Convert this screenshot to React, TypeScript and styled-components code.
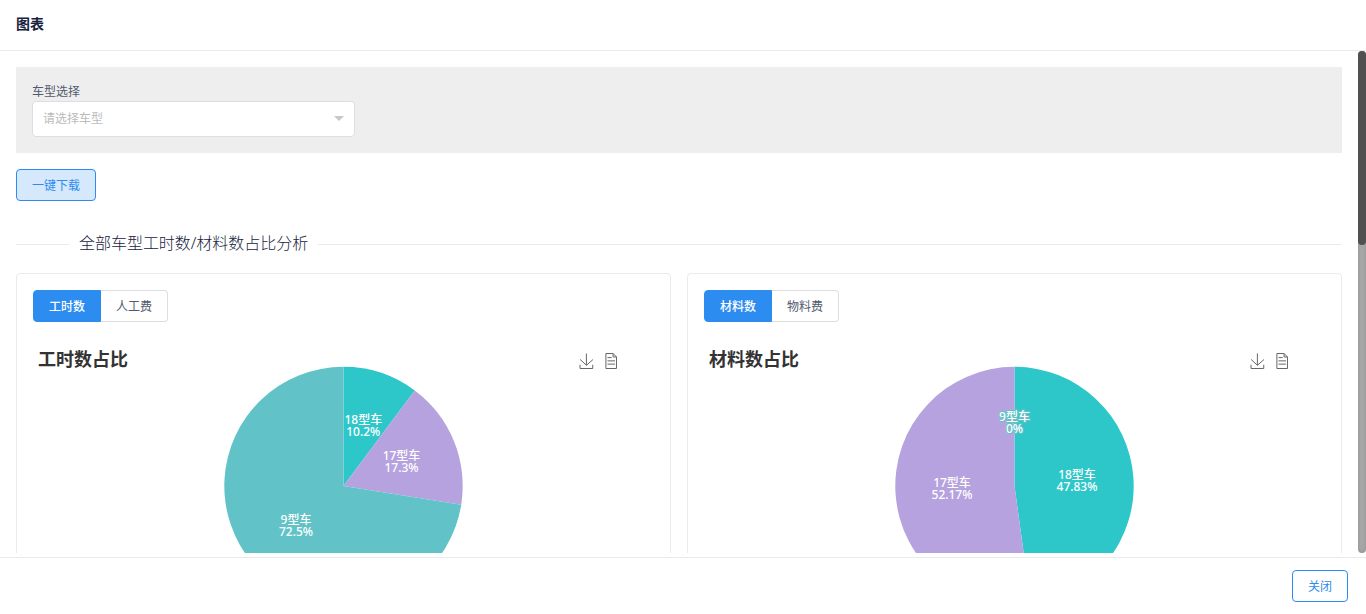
import React from 'react';
import styled, { createGlobalStyle } from 'styled-components';

const GlobalStyle = createGlobalStyle`
  * { box-sizing: border-box; }
  html, body { margin: 0; padding: 0; overflow: hidden; }
  body {
    font-family: "Noto Sans", "Noto Sans CJK SC", sans-serif;
    font-size: 12px;
    color: #515a6e;
    background: #fff;
  }
  button { font-family: inherit; }
`;

const Modal = styled.div`
  display: flex;
  flex-direction: column;
  width: 1366px;
  height: 614px;
  background: #fff;
`;

const Header = styled.header`
  height: 51px;
  flex: none;
  padding: 14px 16px 0;
  border-bottom: 1px solid #e8eaec;
  color: #17233d;
  font-size: 14px;
  font-weight: 700;
  line-height: 20px;
`;

const Body = styled.div`
  display: flex;
  flex: none;
  height: 502px;
`;

const Content = styled.main`
  width: 1358px;
  height: 502px;
  padding: 16px 16px 0;
  overflow: hidden;
`;

const ScrollTrack = styled.div`
  width: 8px;
  height: 502px;
  border-radius: 4px;
  background: #a8a8a8;
  box-shadow: inset 0 0 4px rgba(0, 0, 0, 0.15);
`;

const ScrollThumb = styled.div`
  height: 194px;
  border-radius: 4px;
  background: #505050;
`;

const Filter = styled.section`
  height: 86px;
  padding: 16px;
  background: #eee;
`;

const Label = styled.div`
  height: 18px;
  line-height: 17px;
`;

const Select = styled.div`
  display: flex;
  align-items: center;
  justify-content: space-between;
  width: 323px;
  height: 36px;
  padding: 0 10px;
  border: 1px solid #dcdee2;
  border-radius: 4px;
  background: #fff;
  color: #bbb;
  line-height: 34px;
`;

const Caret = styled.span`
  margin-bottom: 1px;
  border: 5px solid transparent;
  border-top-color: #c5c8ce;
  border-bottom: 0;
`;

const OutlineButton = styled.button<{ $active?: boolean; $width: number }>`
  display: block;
  width: ${(p) => p.$width}px;
  height: 32px;
  padding: 0;
  border: 1px solid #2d8cf0;
  border-radius: 4px;
  background: ${(p) => (p.$active ? '#d5e8fc' : '#fff')};
  color: #2d8cf0;
  font-size: 12px;
  line-height: 29px;
`;

const Actions = styled.div`
  margin-top: 16px;
`;

const Divider = styled.div`
  display: flex;
  align-items: center;
  height: 24px;
  margin: 31px 0 17px;
  color: #17233d;
  font-size: 16px;
  font-weight: 300;
  line-height: 24px;
  white-space: nowrap;

  &::before, &::after {
    content: '';
    height: 1px;
    background: #e8eaec;
  }
  &::before { width: 53px; }
  &::after { flex: 1; }
`;

const DividerText = styled.span`
  position: relative;
  top: -1px;
  padding: 0 10px;
  letter-spacing: -0.03px;
`;

const Cards = styled.div`
  display: grid;
  grid-template-columns: 655px 655px;
  gap: 16px;
`;

const Card = styled.section`
  height: 420px;
  padding: 16px;
  border: 1px solid #e8eaec;
  border-radius: 4px;
  background: #fff;
`;

const Tabs = styled.div`
  display: flex;
`;

const Tab = styled.button<{ $active?: boolean }>`
  width: ${(p) => (p.$active ? 68 : 67)}px;
  height: 32px;
  padding: 0;
  border: 1px solid ${(p) => (p.$active ? '#2d8cf0' : '#dcdee2')};
  border-left-width: ${(p) => (p.$active ? 1 : 0)}px;
  border-radius: ${(p) => (p.$active ? '4px 0 0 4px' : '0 4px 4px 0')};
  background: ${(p) => (p.$active ? '#2d8cf0' : '#fff')};
  color: ${(p) => (p.$active ? '#fff' : '#515a6e')};
  font-size: 12px;
  font-weight: ${(p) => (p.$active ? 500 : 400)};
  line-height: 29px;
`;

const ChartArea = styled.div`
  width: 621px;
  margin-top: 16px;
`;

const ChartHead = styled.div`
  display: flex;
  justify-content: space-between;
  height: 40px;
  margin-bottom: -40px;
  padding: 8px 35px 0 5px;
`;

const ChartTitle = styled.h2`
  margin: 0;
  color: #333;
  font-size: 18px;
  font-weight: 700;
  line-height: 26px;
`;

const Tools = styled.div`
  display: flex;
  gap: 10px;
  padding-top: 7px;
`;

const ToolIcon = styled.svg`
  width: 15px;
  height: 15px;
  overflow: visible;
  fill: none;
  stroke: #666;
  stroke-width: 1px;

  path { vector-effect: non-scaling-stroke; }
`;

const Pie = styled.svg`
  display: block;
`;

const SliceLabel = styled.text`
  fill: #fff;
  font-size: 12px;
  font-weight: 500;
  text-anchor: middle;
  paint-order: stroke;
  stroke-width: 2px;
  stroke-linejoin: round;
`;

const Footer = styled.footer`
  display: flex;
  justify-content: flex-end;
  height: 57px;
  margin-top: 4px;
  padding: 12px 18px;
  border-top: 1px solid #e8eaec;
`;

type Slice = { name: string; text: string; from: number; to: number; color: string; x: number; y: number };

const CX = 310.5;
const CY = 148;
const R = 119.2;

const point = (share: number) => {
  const a = share * Math.PI * 2;
  return `${CX + R * Math.sin(a)} ${CY - R * Math.cos(a)}`;
};

const slicePath = (s: Slice) =>
  `M${CX} ${CY}L${point(s.from)}A${R} ${R} 0 ${s.to - s.from > 0.5 ? 1 : 0} 1 ${point(s.to)}Z`;

const TEAL = '#2ec7c9';
const PURPLE = '#b6a2de';
const AQUA = '#61c3c7';

const charts: { title: string; tabs: [string, string]; slices: Slice[] }[] = [
  {
    title: '工时数占比',
    tabs: ['工时数', '人工费'],
    slices: [
      { name: '18型车', text: '10.2%', from: 0, to: 0.102, color: TEAL, x: 330.3, y: 86 },
      { name: '17型车', text: '17.3%', from: 0.102, to: 0.275, color: PURPLE, x: 368.5, y: 122 },
      { name: '9型车', text: '72.5%', from: 0.275, to: 1, color: AQUA, x: 263, y: 186 },
    ],
  },
  {
    title: '材料数占比',
    tabs: ['材料数', '物料费'],
    slices: [
      { name: '18型车', text: '47.83%', from: 0, to: 0.4783, color: TEAL, x: 373, y: 141 },
      { name: '17型车', text: '52.17%', from: 0.4783, to: 1, color: PURPLE, x: 248, y: 149 },
      { name: '9型车', text: '0%', from: 1, to: 1, color: AQUA, x: 310.5, y: 83 },
    ],
  },
];

function PieChart({ slices }: { slices: Slice[] }) {
  return (
    <Pie width="621" height="300">
      {slices.map((s) => (
        <path key={s.name} d={slicePath(s)} fill={s.color} />
      ))}
      {slices.map((s) => (
        <SliceLabel key={s.name} stroke={s.color}>
          <tspan x={s.x} y={s.y}>{s.name}</tspan>
          <tspan x={s.x} y={s.y + 12}>{s.text}</tspan>
        </SliceLabel>
      ))}
    </Pie>
  );
}

export default function App() {
  return (
    <>
      <GlobalStyle />
      <Modal>
        <Header>图表</Header>
        <Body>
          <Content>
            <Filter>
              <Label>车型选择</Label>
              <Select>
                <span>请选择车型</span>
                <Caret />
              </Select>
            </Filter>
            <Actions>
              <OutlineButton $active $width={80}>一键下载</OutlineButton>
            </Actions>
            <Divider>
              <DividerText>全部车型工时数/材料数占比分析</DividerText>
            </Divider>
            <Cards>
              {charts.map((c) => (
                <Card key={c.title}>
                  <Tabs>
                    <Tab $active>{c.tabs[0]}</Tab>
                    <Tab>{c.tabs[1]}</Tab>
                  </Tabs>
                  <ChartArea>
                    <ChartHead>
                      <ChartTitle>{c.title}</ChartTitle>
                      <Tools>
                        <ToolIcon viewBox="0.65 -1.93 58 58">
                          <path d="M4.7,22.9L29.3,45.5L54.7,23.4M4.6,43.6L4.6,58L53.8,58L53.8,43.6M29.2,45.1L29.2,0" />
                        </ToolIcon>
                        <ToolIcon viewBox="4.4 0.13 56 56">
                          <path d="M17.5,17.3H33M45.4,29.5h-28M11.5,2v56H51V14.8L38.4,2H11.5zM38.4,2.2v12.7H51M45.4,41.7h-28" />
                        </ToolIcon>
                      </Tools>
                    </ChartHead>
                    <PieChart slices={c.slices} />
                  </ChartArea>
                </Card>
              ))}
            </Cards>
          </Content>
          <ScrollTrack>
            <ScrollThumb />
          </ScrollTrack>
        </Body>
        <Footer>
          <OutlineButton $width={56}>关闭</OutlineButton>
        </Footer>
      </Modal>
    </>
  );
}
